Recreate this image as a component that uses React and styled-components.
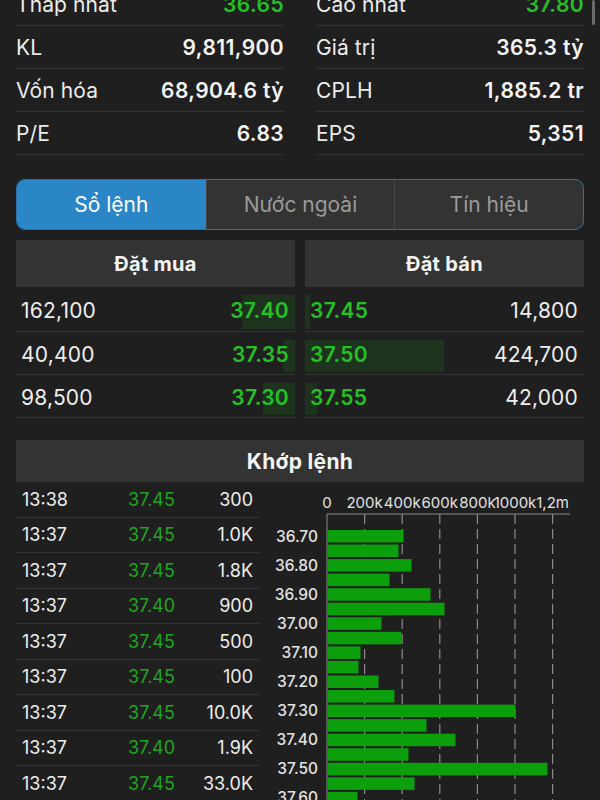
import React from "react";
import styled, { createGlobalStyle } from "styled-components";

const GlobalStyle = createGlobalStyle`
  html, body {
    margin: 0;
    padding: 0;
    background: #1f1f1f;
    overflow: hidden;
  }
  body {
    font-family: "Inter", "Noto Sans", sans-serif;
    color: #f2f2f2;
  }
`;

const green = "#26c026";
const tradeGreen = "#1fa51f";
const barGreen = "#0ba00b";

const Page = styled.div`
  position: relative;
  width: 600px;
  height: 800px;
  overflow: hidden;
  padding: 0 16px;
  box-sizing: border-box;
`;

const ScrollThumb = styled.div`
  position: absolute;
  top: 0;
  right: 5px;
  width: 3px;
  height: 25px;
  border-radius: 2px;
  background: #6a6a6a;
`;

/* stats */
const StatsGrid = styled.div`
  display: grid;
  grid-template-columns: 1fr 1fr;
  column-gap: 32px;
  margin-top: -17px;
`;

const StatCol = styled.div`
  display: flex;
  flex-direction: column;
`;

const StatRow = styled.div`
  height: 43px;
  display: flex;
  align-items: center;
  justify-content: space-between;
  border-bottom: 1px solid #303030;
  box-sizing: border-box;
  font-size: 21px;
  padding-top: 1px;
`;

const StatLabel = styled.span`
  color: #ececec;
  letter-spacing: 0.1px;
`;

const StatValue = styled.span`
  font-weight: 600;
  letter-spacing: 0.4px;
  color: ${p => (p.up ? green : "#f4f4f4")};
`;

/* tabs */
const Tabs = styled.div`
  margin-top: 24px;
  height: 51px;
  display: grid;
  grid-template-columns: 1fr 1fr 1fr;
  border: 1.5px solid #2a6fa8;
  border-radius: 9px;
  overflow: hidden;
  background: #333333;
  box-sizing: border-box;
`;

const Tab = styled.div`
  display: flex;
  align-items: center;
  justify-content: center;
  font-size: 21px;
  color: ${p => (p.active ? "#ffffff" : "#9a9a9a")};
  background: ${p => (p.active ? "#2a86c6" : "transparent")};
  border-left: ${p => (p.first ? "none" : "1px solid #474747")};
`;

/* order book */
const Book = styled.div`
  margin-top: 10px;
  display: grid;
  grid-template-columns: 1fr 1fr;
  column-gap: 10px;
`;

const Side = styled.div`
  display: flex;
  flex-direction: column;
`;

const BoxHeader = styled.div`
  height: ${p => p.h || 47}px;
  display: flex;
  align-items: center;
  justify-content: center;
  background: #333333;
  font-size: ${p => p.fs || 20}px;
  font-weight: 700;
  letter-spacing: 0.3px;
  color: #f4f4f4;
`;

const BookRow = styled.div`
  position: relative;
  height: ${p => p.h || 43}px;
  display: flex;
  align-items: center;
  justify-content: space-between;
  padding-left: 5px;
  padding-right: 6px;
  padding-top: 2px;
  border-bottom: 1px solid #333333;
  box-sizing: border-box;
  font-size: 21px;
`;

const VolBar = styled.div`
  position: absolute;
  top: 8px;
  bottom: 2px;
  ${p => (p.ask ? "left: 0;" : "right: 0;")}
  background: #1d331d;
`;

const Qty = styled.span`
  position: relative;
  color: #eeeeee;
  letter-spacing: 0.2px;
`;

const Price = styled.span`
  position: relative;
  color: ${green};
  font-weight: 600;
  letter-spacing: 0.3px;
`;

/* trades */
const MatchHeader = styled(BoxHeader)`
  margin-top: 22px;
`;

const Lower = styled.div`
  display: grid;
  grid-template-columns: 244px 1fr;
  column-gap: 10px;
`;

const TradeList = styled.div`
  display: flex;
  flex-direction: column;
`;

const TradeRow = styled.div`
  height: 35.5px;
  display: grid;
  grid-template-columns: 1fr 1fr 1fr;
  align-items: center;
  padding: 0 7px 0 6px;
  border-bottom: 1px solid #333333;
  box-sizing: border-box;
  font-size: 18px;
  color: #eeeeee;
`;

const TPrice = styled.span`
  text-align: center;
  color: ${tradeGreen};
  padding-left: 28px;
`;

const TQty = styled.span`
  text-align: right;
`;

const ChartBox = styled.div`
  padding-top: 4px;
`;

const leftStats = [
  ["Thấp nhất", "36.65", true],
  ["KL", "9,811,900"],
  ["Vốn hóa", "68,904.6 tỷ"],
  ["P/E", "6.83"],
];
const rightStats = [
  ["Cao nhất", "37.80", true],
  ["Giá trị", "365.3 tỷ"],
  ["CPLH", "1,885.2 tr"],
  ["EPS", "5,351"],
];

const bids = [
  { qty: "162,100", price: "37.40", bar: 53 },
  { qty: "40,400", price: "37.35", bar: 12 },
  { qty: "98,500", price: "37.30", bar: 32 },
];
const asks = [
  { qty: "14,800", price: "37.45", bar: 5 },
  { qty: "424,700", price: "37.50", bar: 139 },
  { qty: "42,000", price: "37.55", bar: 12 },
];

const trades = [
  ["13:38", "37.45", "300"],
  ["13:37", "37.45", "1.0K"],
  ["13:37", "37.45", "1.8K"],
  ["13:37", "37.40", "900"],
  ["13:37", "37.45", "500"],
  ["13:37", "37.45", "100"],
  ["13:37", "37.45", "10.0K"],
  ["13:37", "37.40", "1.9K"],
  ["13:37", "37.45", "33.0K"],
];

// bar end x (px in chart) per 0.05 step from 36.70
const bars = [133, 128, 141, 119, 160, 174, 111, 131, 90, 88, 108, 124, 245, 156, 185, 138, 277, 144, 87];
const ticks = ["0", "200k", "400k", "600k", "800k", "1000k", "1,2m"];

const VolumeChart = () => {
  const x0 = 57;
  const step = 37.6;
  const top = 28;
  const rowStep = 14.55;
  const firstBar = 44;
  return (
    <svg width="314" height="320" viewBox="0 0 314 320">
      {ticks.map((t, i) => (
        <text key={t} x={x0 + step * i} y="22" fill="#e2e2e2" fontSize="15"
          fontFamily="Inter, sans-serif" textAnchor="middle">{t}</text>
      ))}
      <line x1={x0} y1={top} x2="300" y2={top} stroke="#8a8a8a" strokeWidth="1" />
      <line x1={x0} y1={top} x2={x0} y2="320" stroke="#8a8a8a" strokeWidth="1" />
      {ticks.slice(1).map((t, i) => (
        <line key={t} x1={x0 + step * (i + 1)} y1={top} x2={x0 + step * (i + 1)} y2="320"
          stroke="#8a8a8a" strokeWidth="1.2" strokeDasharray="10 5" />
      ))}
      {bars.map((end, i) => (
        <rect key={i} x={x0 + 0.5} y={firstBar + rowStep * i} width={end - x0} height="12.5" fill={barGreen} />
      ))}
      {bars.map((_, i) =>
        i % 2 === 0 ? (
          <text key={"l" + i} x="48" y={firstBar + rowStep * i + 11.5} fill="#e2e2e2" fontSize="15.5"
            fontWeight="500" fontFamily="Inter, sans-serif" textAnchor="end">
            {(36.7 + i * 0.05).toFixed(2)}
          </text>
        ) : null
      )}
    </svg>
  );
};

const App = () => {
  return (
    <Page>
      <GlobalStyle />
      <ScrollThumb />
      <StatsGrid>
        {[leftStats, rightStats].map((col, ci) => (
          <StatCol key={ci}>
            {col.map(([label, value, up]) => (
              <StatRow key={label}>
                <StatLabel>{label}</StatLabel>
                <StatValue up={up}>{value}</StatValue>
              </StatRow>
            ))}
          </StatCol>
        ))}
      </StatsGrid>

      <Tabs>
        <Tab active first>Sổ lệnh</Tab>
        <Tab>Nước ngoài</Tab>
        <Tab>Tín hiệu</Tab>
      </Tabs>

      <Book>
        <Side>
          <BoxHeader>Đặt mua</BoxHeader>
          {bids.map((b, i) => (
            <BookRow key={b.price} h={i === 0 ? 45 : 43}>
              <VolBar style={{ width: b.bar }} />
              <Qty>{b.qty}</Qty>
              <Price>{b.price}</Price>
            </BookRow>
          ))}
        </Side>
        <Side>
          <BoxHeader>Đặt bán</BoxHeader>
          {asks.map((a, i) => (
            <BookRow key={a.price} h={i === 0 ? 45 : 43}>
              <VolBar ask style={{ width: a.bar }} />
              <Price>{a.price}</Price>
              <Qty>{a.qty}</Qty>
            </BookRow>
          ))}
        </Side>
      </Book>

      <MatchHeader h={42} fs={21}>Khớp lệnh</MatchHeader>
      <Lower>
        <TradeList>
          {trades.map(([t, p, q], i) => (
            <TradeRow key={i}>
              <span>{t}</span>
              <TPrice>{p}</TPrice>
              <TQty>{q}</TQty>
            </TradeRow>
          ))}
        </TradeList>
        <ChartBox>
          <VolumeChart />
        </ChartBox>
      </Lower>
    </Page>
  );
};

export default App;
